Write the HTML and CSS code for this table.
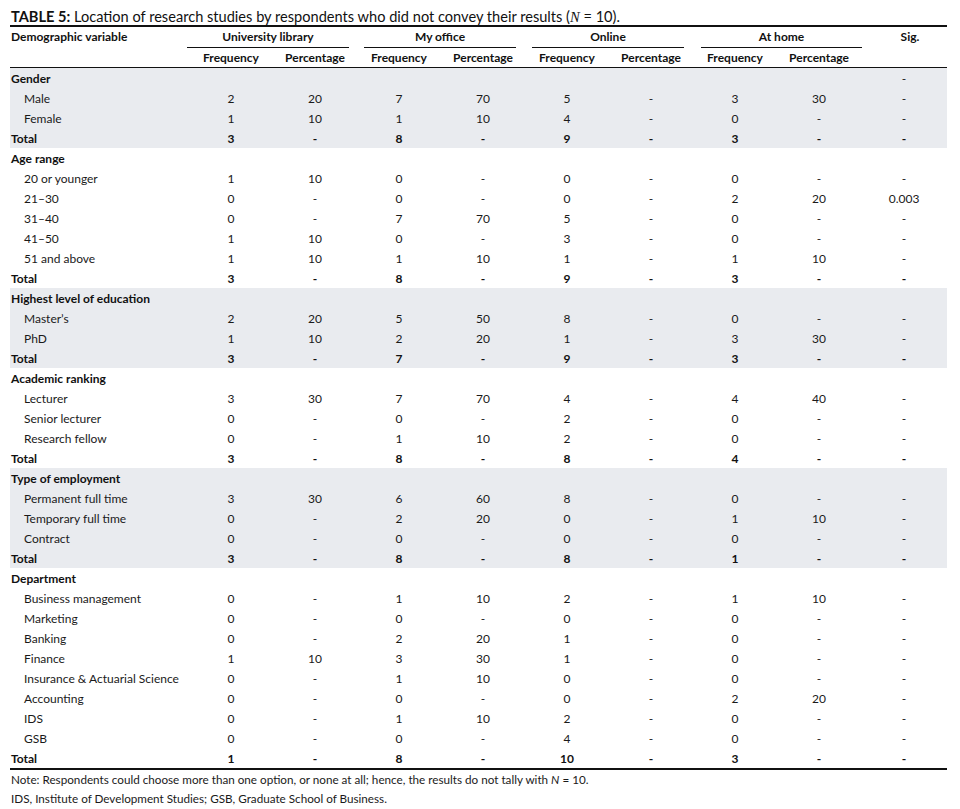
FILE: index.html
```html
<!DOCTYPE html>
<html lang="en">
<head>
<meta charset="utf-8">
<title>Table 5</title>
<link rel="stylesheet" href="styles.css">
</head>
<body>
<div class="page">
  <p class="caption"><b>TABLE 5:</b> Location of research studies by respondents who did not convey their results (<i class="n">N</i> = 10).</p>
  <table class="data">
    <colgroup>
      <col class="c-label">
      <col class="c-num"><col class="c-num"><col class="c-num"><col class="c-num">
      <col class="c-num"><col class="c-num"><col class="c-num"><col class="c-num">
      <col class="c-sig">
    </colgroup>
    <thead>
      <tr class="h1">
        <th rowspan="2" class="lab">Demographic variable</th>
        <th colspan="2"><div class="grp g1">University library</div></th>
        <th colspan="2"><div class="grp g2">My office</div></th>
        <th colspan="2"><div class="grp g3">Online</div></th>
        <th colspan="2"><div class="grp g4">At home</div></th>
        <th rowspan="2" class="sig">Sig.</th>
      </tr>
      <tr class="h2">
        <th>Frequency</th><th>Percentage</th>
        <th>Frequency</th><th>Percentage</th>
        <th>Frequency</th><th>Percentage</th>
        <th>Frequency</th><th>Percentage</th>
      </tr>
    </thead>
    <tbody class="shade">
      <tr class="head"><td>Gender</td><td></td><td></td><td></td><td></td><td></td><td></td><td></td><td></td><td>-</td></tr>
      <tr><td class="sub">Male</td><td>2</td><td>20</td><td>7</td><td>70</td><td>5</td><td>-</td><td>3</td><td>30</td><td>-</td></tr>
      <tr><td class="sub">Female</td><td>1</td><td>10</td><td>1</td><td>10</td><td>4</td><td>-</td><td>0</td><td>-</td><td>-</td></tr>
      <tr class="total"><td>Total</td><td>3</td><td>-</td><td>8</td><td>-</td><td>9</td><td>-</td><td>3</td><td>-</td><td>-</td></tr>
    </tbody>
    <tbody>
      <tr class="head"><td>Age range</td><td></td><td></td><td></td><td></td><td></td><td></td><td></td><td></td><td></td></tr>
      <tr><td class="sub">20 or younger</td><td>1</td><td>10</td><td>0</td><td>-</td><td>0</td><td>-</td><td>0</td><td>-</td><td>-</td></tr>
      <tr><td class="sub">21–30</td><td>0</td><td>-</td><td>0</td><td>-</td><td>0</td><td>-</td><td>2</td><td>20</td><td>0.003</td></tr>
      <tr><td class="sub">31–40</td><td>0</td><td>-</td><td>7</td><td>70</td><td>5</td><td>-</td><td>0</td><td>-</td><td>-</td></tr>
      <tr><td class="sub">41–50</td><td>1</td><td>10</td><td>0</td><td>-</td><td>3</td><td>-</td><td>0</td><td>-</td><td>-</td></tr>
      <tr><td class="sub">51 and above</td><td>1</td><td>10</td><td>1</td><td>10</td><td>1</td><td>-</td><td>1</td><td>10</td><td>-</td></tr>
      <tr class="total"><td>Total</td><td>3</td><td>-</td><td>8</td><td>-</td><td>9</td><td>-</td><td>3</td><td>-</td><td>-</td></tr>
    </tbody>
    <tbody class="shade">
      <tr class="head"><td>Highest level of education</td><td></td><td></td><td></td><td></td><td></td><td></td><td></td><td></td><td></td></tr>
      <tr><td class="sub">Master’s</td><td>2</td><td>20</td><td>5</td><td>50</td><td>8</td><td>-</td><td>0</td><td>-</td><td>-</td></tr>
      <tr><td class="sub">PhD</td><td>1</td><td>10</td><td>2</td><td>20</td><td>1</td><td>-</td><td>3</td><td>30</td><td>-</td></tr>
      <tr class="total"><td>Total</td><td>3</td><td>-</td><td>7</td><td>-</td><td>9</td><td>-</td><td>3</td><td>-</td><td>-</td></tr>
    </tbody>
    <tbody>
      <tr class="head"><td>Academic ranking</td><td></td><td></td><td></td><td></td><td></td><td></td><td></td><td></td><td></td></tr>
      <tr><td class="sub">Lecturer</td><td>3</td><td>30</td><td>7</td><td>70</td><td>4</td><td>-</td><td>4</td><td>40</td><td>-</td></tr>
      <tr><td class="sub">Senior lecturer</td><td>0</td><td>-</td><td>0</td><td>-</td><td>2</td><td>-</td><td>0</td><td>-</td><td>-</td></tr>
      <tr><td class="sub">Research fellow</td><td>0</td><td>-</td><td>1</td><td>10</td><td>2</td><td>-</td><td>0</td><td>-</td><td>-</td></tr>
      <tr class="total"><td>Total</td><td>3</td><td>-</td><td>8</td><td>-</td><td>8</td><td>-</td><td>4</td><td>-</td><td>-</td></tr>
    </tbody>
    <tbody class="shade">
      <tr class="head"><td>Type of employment</td><td></td><td></td><td></td><td></td><td></td><td></td><td></td><td></td><td></td></tr>
      <tr><td class="sub">Permanent full time</td><td>3</td><td>30</td><td>6</td><td>60</td><td>8</td><td>-</td><td>0</td><td>-</td><td>-</td></tr>
      <tr><td class="sub">Temporary full time</td><td>0</td><td>-</td><td>2</td><td>20</td><td>0</td><td>-</td><td>1</td><td>10</td><td>-</td></tr>
      <tr><td class="sub">Contract</td><td>0</td><td>-</td><td>0</td><td>-</td><td>0</td><td>-</td><td>0</td><td>-</td><td>-</td></tr>
      <tr class="total"><td>Total</td><td>3</td><td>-</td><td>8</td><td>-</td><td>8</td><td>-</td><td>1</td><td>-</td><td>-</td></tr>
    </tbody>
    <tbody class="last">
      <tr class="head"><td>Department</td><td></td><td></td><td></td><td></td><td></td><td></td><td></td><td></td><td></td></tr>
      <tr><td class="sub">Business management</td><td>0</td><td>-</td><td>1</td><td>10</td><td>2</td><td>-</td><td>1</td><td>10</td><td>-</td></tr>
      <tr><td class="sub">Marketing</td><td>0</td><td>-</td><td>0</td><td>-</td><td>0</td><td>-</td><td>0</td><td>-</td><td>-</td></tr>
      <tr><td class="sub">Banking</td><td>0</td><td>-</td><td>2</td><td>20</td><td>1</td><td>-</td><td>0</td><td>-</td><td>-</td></tr>
      <tr><td class="sub">Finance</td><td>1</td><td>10</td><td>3</td><td>30</td><td>1</td><td>-</td><td>0</td><td>-</td><td>-</td></tr>
      <tr><td class="sub">Insurance &amp; Actuarial Science</td><td>0</td><td>-</td><td>1</td><td>10</td><td>0</td><td>-</td><td>0</td><td>-</td><td>-</td></tr>
      <tr><td class="sub">Accounting</td><td>0</td><td>-</td><td>0</td><td>-</td><td>0</td><td>-</td><td>2</td><td>20</td><td>-</td></tr>
      <tr><td class="sub">IDS</td><td>0</td><td>-</td><td>1</td><td>10</td><td>2</td><td>-</td><td>0</td><td>-</td><td>-</td></tr>
      <tr><td class="sub">GSB</td><td>0</td><td>-</td><td>0</td><td>-</td><td>4</td><td>-</td><td>0</td><td>-</td><td>-</td></tr>
      <tr class="total"><td>Total</td><td>1</td><td>-</td><td>8</td><td>-</td><td>10</td><td>-</td><td>3</td><td>-</td><td>-</td></tr>
    </tbody>
  </table>
  <p class="note">Note: Respondents could choose more than one option, or none at all; hence, the results do not tally with <i>N</i> = 10.</p>
  <p class="note">IDS, Institute of Development Studies; GSB, Graduate School of Business.</p>
</div>
</body>
</html>
```

FILE: styles.css
```css
html, body {
  margin: 0;
  padding: 0;
  background: #ffffff;
}

body {
  font-family: Lato, "Open Sans", "Liberation Sans", sans-serif;
  color: #1a1a1a;
  font-size: 12px;
}

.page {
  padding: 9px 13px 0 10px;
}

.caption {
  margin: 0;
  height: 16px;
  line-height: 16px;
  font-size: 14.6px;
  padding-left: 1px;
  color: #111;
  white-space: nowrap;
}

.caption .n {
  font-family: "Liberation Serif", serif;
}

.data {
  width: 937px;
  border-collapse: separate;
  border-spacing: 0;
  border-top: 2px solid #111;
  border-bottom: 2px solid #111;
  table-layout: fixed;
}

.c-label { width: 179px; }
.c-num { width: 84px; }
.c-sig { width: 86px; }

th, td {
  padding: 0;
  font-size: 12px;
  text-align: center;
  white-space: nowrap;
}

th {
  font-weight: bold;
  color: #111;
  line-height: 20px;
}

.h1 th {
  vertical-align: top;
  height: 20px;
}

.h1 th.lab {
  text-align: left;
  padding-left: 1px;
  border-bottom: 1px solid #111;
}

.h1 th.sig {
  border-bottom: 1px solid #111;
  padding-left: 12px;
}

.grp {
  border-bottom: 1px solid #111;
  height: 20px;
}

.g1 { margin: 0 8px 0 -2px; }
.g2 { margin: 0 9px 0 7px; }
.g3 { margin: 0 9px 0 7px; }
.g4 { margin: 0 -1px 0 8px; }

.h2 th {
  height: 19px;
  line-height: 19px;
  border-bottom: 1px solid #111;
}

td {
  height: 19px;
  line-height: 19px;
  padding-top: 1px;
}

tbody.shade td {
  background: #e9ebef;
}

td:first-child {
  text-align: left;
  padding-left: 1px;
}

td.sub {
  padding-left: 14px;
}

tr.head td:first-child {
  font-weight: bold;
  color: #111;
}

tr.total td {
  font-weight: bold;
  color: #111;
}

.note {
  margin: 0;
  font-size: 11.7px;
  line-height: 19px;
  padding-left: 1px;
  color: #1a1a1a;
  white-space: nowrap;
}

.note:first-of-type {
  margin-top: 2px;
}
```
